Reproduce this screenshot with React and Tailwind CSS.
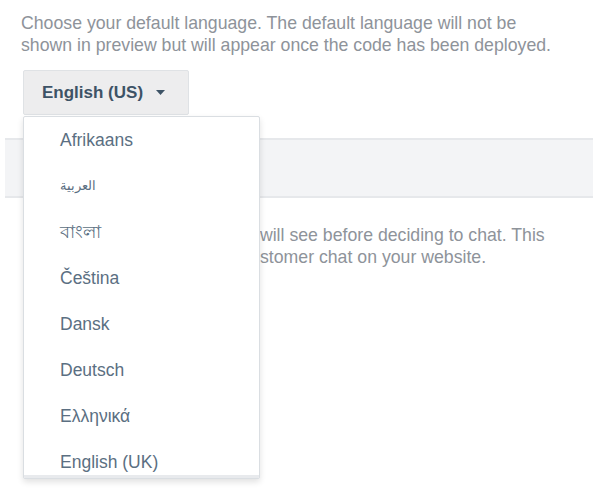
import React from 'react';

const languages = [
  { label: 'Afrikaans' },
  { label: 'العربية', small: true },
  { label: 'বাংলা' },
  { label: 'Čeština' },
  { label: 'Dansk' },
  { label: 'Deutsch' },
  { label: 'Ελληνικά' },
  { label: 'English (UK)' },
];

const App = () => {
  return (
    <div className="min-h-screen bg-white text-[17.7px] leading-[22px]" style={{ fontFamily: '"Liberation Sans", Arial, sans-serif' }}>
      {/* default language */}
      <div className="pl-[21px] pt-[12px]">
        <p className="text-[#8e939a] w-[540px]">
          Choose your default language. The default language will not be shown in preview but will appear once the code has been deployed.
        </p>

        <div className="relative mt-[14px] ml-[2px] w-fit">
          <button className="flex items-center gap-[13px] h-[45px] pl-[18px] pr-[23px] bg-[#ededee] border border-[#dfe2e5] rounded-[2px] text-[#3d5366] font-bold text-[17px]">
            English (US)
            <svg width="9" height="5" viewBox="0 0 9 5"><path d="M0 0h9L4.5 5z" fill="#3d5366" /></svg>
          </button>

          {/* dropdown menu */}
          <div className="absolute left-0 top-[46px] z-10 w-[237px] h-[363px] bg-white border border-[#dadee2] rounded-[2px] shadow-[0_3px_6px_rgba(0,0,0,0.12)] overflow-hidden">
            <ul className="h-[358px] overflow-hidden">
              {languages.map((lang) => (
                <li key={lang.label} className={`flex items-center h-[46px] pl-[36px] text-[#5b6f82] ${lang.small ? 'text-[13px]' : 'text-[17.5px]'}`}>
                  {lang.label}
                </li>
              ))}
            </ul>
            <div className="h-[4px] bg-[#e8eaed]" />
          </div>
        </div>
      </div>

      {/* next section band */}
      <div className="ml-[5px] mt-[23px] h-[60px] bg-[#f3f4f6] border-y-2 border-[#e6e8eb]" />

      {/* greeting description */}
      <div className="pl-[24px] pt-[26px]">
        <p className="text-[#8e939a] w-[535px]">
          This is the text our customers will see before deciding to chat. This text is displayed beside the customer chat on your website.
        </p>
      </div>
    </div>
  );
};

export default App;
